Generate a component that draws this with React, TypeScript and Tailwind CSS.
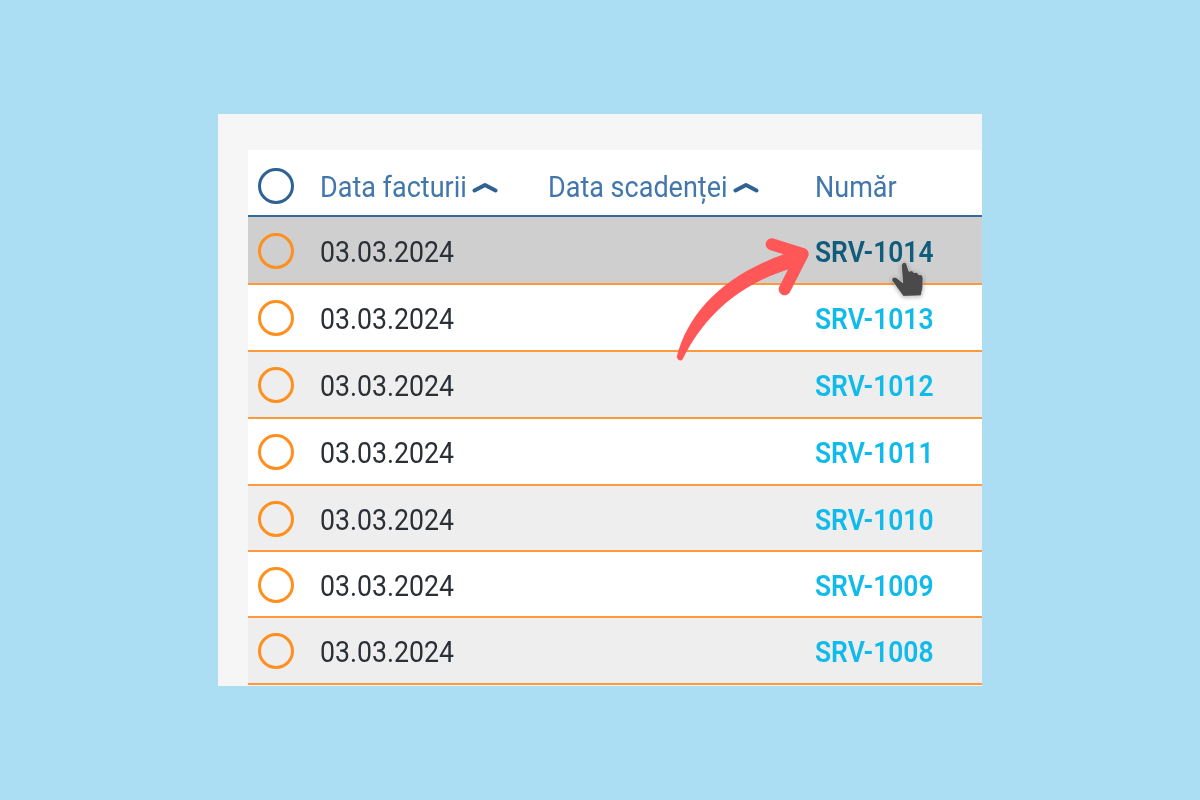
const rows = [
  { nr: "SRV-1014", h: "h-[68px]", bg: "bg-[#cfcfcf]", link: "text-[#0f5c7b]" },
  { nr: "SRV-1013", h: "h-[67px]", bg: "bg-white", link: "text-[#10bbec]" },
  { nr: "SRV-1012", h: "h-[67px]", bg: "bg-[#eeeeee]", link: "text-[#10bbec]" },
  { nr: "SRV-1011", h: "h-[67px]", bg: "bg-white", link: "text-[#10bbec]" },
  { nr: "SRV-1010", h: "h-[66px]", bg: "bg-[#eeeeee]", link: "text-[#10bbec]" },
  { nr: "SRV-1009", h: "h-[66px]", bg: "bg-white", link: "text-[#10bbec]" },
  { nr: "SRV-1008", h: "h-[67px]", bg: "bg-[#eeeeee]", link: "text-[#10bbec]" },
];

function Chevron() {
  return (
    <svg width="26" height="11" viewBox="0 0 26 11" className="ml-[6px] mt-[2px] shrink-0">
      <path d="M2.5 8.5 L13 3 L23.5 8.5" fill="none" stroke="#2f6293" strokeWidth="4" strokeLinecap="round" strokeLinejoin="round" />
    </svg>
  );
}

function HeaderCell({ label, width, labelWidth, sort }: { label: string; width: string; labelWidth: string; sort?: boolean }) {
  return (
    <div className={`flex items-center pt-[2px] ${width}`}>
      <span className={`inline-block origin-left scale-x-[0.9] whitespace-nowrap text-[30px] leading-none text-[#4277ab] ${labelWidth}`}>{label}</span>
      {sort && <Chevron />}
    </div>
  );
}

export default function App() {
  return (
    <div className="flex h-[800px] w-[1200px] items-center justify-center bg-[#abddf3] font-['Roboto',sans-serif]">
      <div className="relative h-[572px] w-[764px] overflow-hidden bg-[#f6f6f6] pl-[30px] pt-[36px]">
        <div className="w-[734px]">
          <div className="flex h-[67px] items-center border-b-2 border-[#376a9c] bg-white pl-[10px] pt-[6px]">
            <div className="mr-[26px] h-[36px] w-[36px] shrink-0 rounded-full border-[3px] border-[#2f6293]" />
            <HeaderCell label="Data facturii" width="w-[228px]" labelWidth="w-[146px]" sort />
            <HeaderCell label="Data scadenței" width="w-[267px]" labelWidth="w-[179px]" sort />
            <HeaderCell label="Număr" width="w-[120px]" labelWidth="w-[80px]" />
          </div>
          {rows.map((r) => (
            <div key={r.nr} className={`flex items-center border-b-2 border-[#ff9a3c] pl-[10px] pt-[1px] ${r.h} ${r.bg}`}>
              <div className="mr-[26px] h-[36px] w-[36px] shrink-0 rounded-full border-[3px] border-[#ff8f1f]" />
              <span className="inline-block w-[495px] origin-left scale-x-[0.89] pt-[2px] text-[30px] leading-none text-[#2b2f36]">03.03.2024</span>
              <span className={`inline-block origin-left scale-x-[0.88] whitespace-nowrap pt-[2px] text-[30px] font-semibold leading-none ${r.link}`}>{r.nr}</span>
            </div>
          ))}
        </div>

        {/* arrow */}
        <svg width="330" height="220" viewBox="0 0 990 660" className="absolute left-[442px] top-[36px]">
          <path d="M50 622 C85 480 205 365 395 305 L410 350 C250 395 135 490 68 628 Q58 638 50 622 Z" fill="#ff5757" />
          <path d="M335 283 L428 312 L374 418" fill="none" stroke="#ff5757" strokeWidth="36" strokeLinecap="round" strokeLinejoin="round" />
        </svg>

        {/* hand cursor */}
        <svg width="90" height="80" viewBox="0 0 270 240" className="absolute left-[642px] top-[116px] drop-shadow-[0_1px_2px_rgba(0,0,0,0.3)]">
          <path d="M124 106 Q130 92 139 100 L147 124 Q157 118 162 128 Q173 124 176 134 Q188 132 189 145 Q191 170 183 197 L130 199 L96 152 Q93 140 108 142 L128 158 Z" fill="#4a4a4a" stroke="#ffffff" strokeWidth="1.5" strokeLinejoin="round" />
        </svg>
      </div>
    </div>
  );
}
